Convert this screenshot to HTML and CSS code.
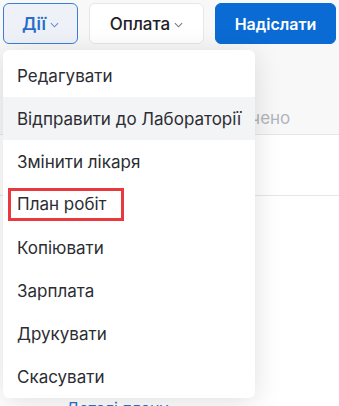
FILE: index.html
```html
<!DOCTYPE html>
<html lang="uk">
<head>
<meta charset="utf-8">
<link rel="stylesheet" href="styles.css">
</head>
<body>
<div class="page">
  <div class="toolbar">
    <button class="btn btn-actions">Дії<svg class="chev" viewBox="0 0 10 6" width="9" height="6"><path d="M1 1l4 4 4-4" fill="none" stroke="currentColor" stroke-width="1.2"/></svg></button>
    <button class="btn btn-pay">Оплата<svg class="chev" viewBox="0 0 10 6" width="9" height="6"><path d="M1 1l4 4 4-4" fill="none" stroke="currentColor" stroke-width="1.2"/></svg></button>
    <button class="btn btn-send">Надіслати</button>
  </div>
  <div class="content">
    <div class="row head"><span class="paid">Оплачено</span></div>
    <div class="row body-row"></div>
    <div class="row link-row"><span class="link">Деталі плану</span></div>
  </div>
  <div class="menu">
    <div class="item">Редагувати</div>
    <div class="item hover">Відправити до Лабораторії</div>
    <div class="item">Змінити лікаря</div>
    <div class="item"><span class="marked">План робіт</span></div>
    <div class="item">Копіювати</div>
    <div class="item">Зарплата</div>
    <div class="item">Друкувати</div>
    <div class="item">Скасувати</div>
  </div>
</div>
</body>
</html>
```
FILE: styles.css
```css
* { box-sizing: border-box; }
html, body { margin: 0; padding: 0; }
body {
  background: #ffffff;
  font-family: "Inter", "Noto Sans", sans-serif;
  width: 339px;
  height: 406px;
  overflow: hidden;
}
.page { position: relative; height: 406px; }
.toolbar {
  display: flex;
  gap: 11px;
  padding: 3px 0 0 3px;
  height: 50px;
  background: #f8f8f9;
}
.btn {
  height: 41px;
  border-radius: 6px;
  font-family: inherit;
  font-size: 17px;
  display: flex;
  align-items: center;
  justify-content: center;
  gap: 4px;
  padding: 0;
  cursor: pointer;
}
.chev { margin-top: 3px; }
.btn-actions {
  width: 75px;
  background: #eef2f8;
  border: 1px solid #3b7fd4;
  color: #2a6cc8;
  font-weight: 600;
}
.btn-actions .chev { color: #5a8fd6; }
.btn-pay {
  width: 115px;
  background: #ffffff;
  border: 1px solid #e6e7ea;
  color: #1f2127;
  font-weight: 500;
}
.btn-pay .chev { color: #777; }
.btn-send {
  width: 121px;
  background: #0b6bd4;
  border: 1px solid #0b6bd4;
  color: #ffffff;
  font-weight: 600;
  font-size: 16px;
}
.content { background: #ffffff; }
.row { border-bottom: 1px solid #e6e7ea; }
.head { height: 85px; background: #f8f8f9; display: flex; align-items: flex-end; padding: 0 0 6px 208px; }
.paid { color: #b3b5bb; font-size: 17px; }
.body-row { height: 61px; }
.link-row { border-bottom: none; padding: 202px 0 0 66px; }
.link { color: #2d6fd0; font-size: 16px; }
.menu {
  position: absolute;
  left: 3px;
  top: 50px;
  width: 252px;
  height: 348px;
  background: #ffffff;
  border-radius: 6px;
  box-shadow: 0 4px 28px rgba(0, 0, 0, 0.13);
  padding-top: 4px;
}
.item {
  height: 43px;
  display: flex;
  align-items: center;
  padding-left: 14px;
  color: #2b2d33;
  font-size: 17px;
}
.item.hover { background: #f3f4f6; }
.marked {
  border: 3px solid #e8393f;
  padding: 3px 14px 4px 6px;
  margin-left: -9px;
}
```
